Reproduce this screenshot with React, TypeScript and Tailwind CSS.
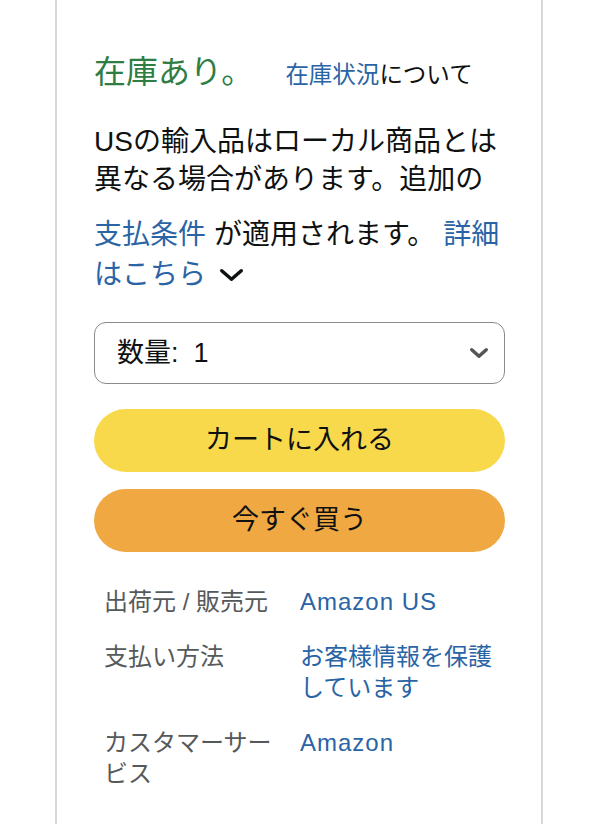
const font = { fontFamily: '"Liberation Sans", "Noto Sans CJK JP", sans-serif' };

function Chevron({ w, h, color, stroke }: { w: number; h: number; color: string; stroke: number }) {
  return (
    <svg width={w} height={h} viewBox={`0 0 ${w} ${h}`} className="inline-block" fill="none">
      <polyline
        points={`${stroke / 2 + 1},${stroke / 2 + 1} ${w / 2},${h - stroke / 2 - 1} ${w - stroke / 2 - 1},${stroke / 2 + 1}`}
        stroke={color}
        strokeWidth={stroke}
        strokeLinecap="round"
        strokeLinejoin="round"
      />
    </svg>
  );
}

function InfoRow({ label, value, latin }: { label: string; value: string; latin?: boolean }) {
  return (
    <div className="flex">
      <div className="w-[194px] shrink-0 pl-[10px] text-[#565959]">{label}</div>
      <div className={`ml-[12px] flex-1 text-[#2a64a5] ${latin ? 'tracking-[1px]' : ''}`}>{value}</div>
    </div>
  );
}

export default function App() {
  return (
    <div className="min-h-screen bg-white" style={font}>
      <div className="ml-[55px] w-[488px] min-h-[824px] border-x-2 border-[#d5d9d9] pl-[37px] pr-[36px] pt-[46px]">
        {/* stock */}
        <div className="flex items-baseline leading-[52px]">
          <span className="text-[32px] text-[#2e7d43]">在庫あり。</span>
          <span className="ml-[32px] text-[23.5px]">
            <span className="text-[#2a64a5]">在庫状況</span>
            <span className="text-[#0f1111]">について</span>
          </span>
        </div>

        <p className="mt-[22px] text-[28px] leading-[38px] text-[#0f1111]">
          USの輸入品はローカル商品とは異なる場合があります。追加の
        </p>
        <p className="mt-[17px] text-[28px] leading-[38px] text-[#0f1111]">
          <span className="text-[#2a64a5]">支払条件</span>
          <span className="ml-[8px]">が適用されます。</span>
          <span className="ml-[8px] text-[#2a64a5]">詳細はこちら</span>
          <span className="ml-[13px] inline-block align-[2px]">
            <Chevron w={25} h={14} color="#0f1111" stroke={3.5} />
          </span>
        </p>

        {/* quantity */}
        <div className="mt-[28px] flex h-[62px] items-center justify-between rounded-[12px] border-[1.5px] border-[#888c8c] bg-white pl-[22px] pr-[15px] text-[27px] text-[#0f1111]">
          <span>数量:&nbsp;&nbsp;1</span>
          <Chevron w={20} h={12} color="#555555" stroke={3.5} />
        </div>

        <button className="mt-[25px] flex h-[63px] w-full items-center justify-center rounded-full bg-[#f8d94c] text-[27px] text-[#0f1111]">
          カートに入れる
        </button>
        <button className="mt-[17px] flex h-[63px] w-full items-center justify-center rounded-full bg-[#f0a843] text-[27px] text-[#0f1111]">
          今すぐ買う
        </button>

        {/* details */}
        <div className="mt-[34px] flex flex-col gap-[24px] text-[24px] leading-[31px]">
          <InfoRow label="出荷元 / 販売元" value="Amazon US" latin />
          <InfoRow label="支払い方法" value="お客様情報を保護しています" />
          <InfoRow label="カスタマーサービス" value="Amazon" latin />
        </div>
      </div>
    </div>
  );
}
